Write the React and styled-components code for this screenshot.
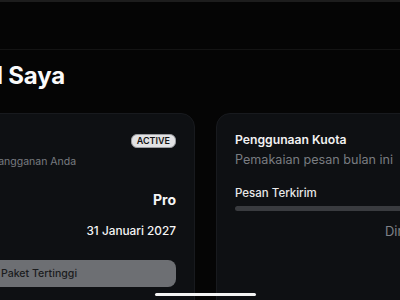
import styled, { createGlobalStyle } from "styled-components";

const GlobalStyle = createGlobalStyle`
  html, body {
    margin: 0;
    padding: 0;
    background: #050505;
  }
  body {
    font-family: Inter, "Noto Sans", "Liberation Sans", sans-serif;
    -webkit-font-smoothing: antialiased;
  }
`;

const Screen = styled.div`
  width: 400px;
  height: 300px;
  overflow: hidden;
  background: #050505;
  position: relative;
  border-top: 2px solid #1d1d1d;
  box-sizing: border-box;
`;

const Header = styled.header`
  height: 47px;
  border-bottom: 1px solid #141414;
  background: #050505;
`;

const Main = styled.main`
  width: 703px;
  margin-left: -146px;
  padding-top: 10px;
`;

const PageTitle = styled.h1`
  margin: 0;
  font-size: 24px;
  line-height: 32px;
  font-weight: 700;
  color: #fafafa;
  letter-spacing: -0.2px;
`;

const Grid = styled.div`
  display: grid;
  grid-template-columns: 1fr 1fr;
  gap: 21px;
  margin-top: 21px;
`;

const Card = styled.section`
  background: #0e1013;
  border: 1px solid #181a1e;
  border-radius: 14px;
  padding: 17px 18px 24px;
  min-height: 220px;
`;

const TitleRow = styled.div`
  display: flex;
  align-items: center;
  justify-content: space-between;
  height: 20px;
`;

const CardTitle = styled.h2`
  margin: 0;
  font-size: 12.2px;
  line-height: 18px;
  font-weight: 600;
  color: #f2f2f2;
`;

const Badge = styled.span`
  background: #e2e2e4;
  color: #141414;
  border: 1px solid #9a9ca0;
  border-radius: 6px;
  font-size: 9px;
  font-weight: 600;
  line-height: 12px;
  padding: 0 5px;
`;

const Subtitle = styled.p`
  margin: ${(p) => p.$mt || 4}px 0 0;
  font-size: ${(p) => p.$size || 11}px;
  line-height: 14px;
  color: #797c81;
`;

const InfoRow = styled.div`
  display: flex;
  align-items: center;
  justify-content: space-between;
  height: 20px;
  margin-top: ${(p) => p.$mt}px;
`;

const Label = styled.span`
  font-size: 12px;
  color: #84878c;
`;

const Value = styled.span`
  font-size: ${(p) => (p.$big ? 14 : 11.8)}px;
  font-weight: ${(p) => (p.$big ? 700 : 500)};
  color: #f5f5f5;
`;

const PlanButton = styled.button`
  display: flex;
  align-items: center;
  justify-content: center;
  width: 100%;
  height: 27px;
  margin-top: 19px;
  padding: 0 6px 0 0;
  border: none;
  border-radius: 8px;
  background: #6d6f73;
  color: #1b1c1e;
  font-family: inherit;
  font-size: 10.6px;
  font-weight: 500;
`;

const MeterLabel = styled.div`
  margin-top: 18px;
  font-size: 11.5px;
  line-height: 16px;
  font-weight: 500;
  color: #e8e8e8;
`;

const Track = styled.div`
  margin-top: 5px;
  height: 5px;
  border-radius: 3px;
  background: #393b3f;
`;

const Note = styled.div`
  margin-top: 13px;
  text-align: right;
  font-size: 12.95px;
  line-height: 14px;
  color: #7f8287;
`;

const HomeIndicator = styled.div`
  position: absolute;
  left: 155px;
  bottom: 4px;
  width: 101px;
  height: 3px;
  border-radius: 2px;
  background: #f4f4f4;
`;

export default function App() {
  return (
    <>
      <GlobalStyle />
      <Screen>
        <Header />
        <Main>
          <PageTitle>Akun &amp; Profil Saya</PageTitle>
          <Grid>
            <Card>
              <TitleRow>
                <CardTitle>Langganan</CardTitle>
                <Badge>ACTIVE</Badge>
              </TitleRow>
              <Subtitle $mt={4} $size={10.5}>Informasi paket dan info langganan Anda</Subtitle>
              <InfoRow $mt={20}>
                <Label>Paket</Label>
                <Value $big>Pro</Value>
              </InfoRow>
              <InfoRow $mt={12}>
                <Label>Berlaku hingga</Label>
                <Value>31 Januari 2027</Value>
              </InfoRow>
              <PlanButton>Sudah Paket Tertinggi</PlanButton>
            </Card>
            <Card>
              <CardTitle>Penggunaan Kuota</CardTitle>
              <Subtitle $size={12.6}>Pemakaian pesan bulan ini</Subtitle>
              <MeterLabel>Pesan Terkirim</MeterLabel>
              <Track />
              <Note>Direset setiap awal bulan</Note>
            </Card>
          </Grid>
        </Main>
        <HomeIndicator />
      </Screen>
    </>
  );
}
